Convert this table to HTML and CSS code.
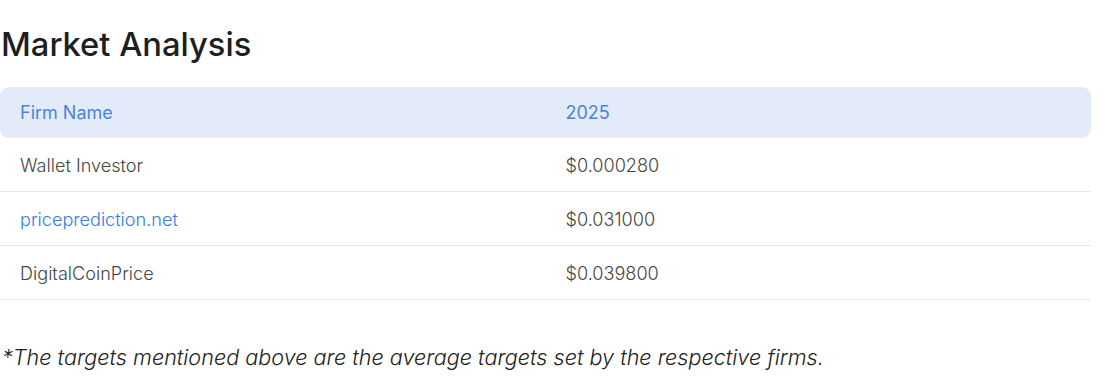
FILE: index.html
```html
<!DOCTYPE html>
<html lang="en">
<head>
<meta charset="utf-8">
<title>Market Analysis</title>
<link rel="stylesheet" href="styles.css">
</head>
<body>
<section class="analysis">
  <h2 class="title">Market Analysis</h2>
  <table class="market">
    <thead>
      <tr><th>Firm Name</th><th>2025</th></tr>
    </thead>
    <tbody>
      <tr><td>Wallet Investor</td><td>$0.000280</td></tr>
      <tr><td><a class="link" href="#">priceprediction.net</a></td><td>$0.031000</td></tr>
      <tr><td>DigitalCoinPrice</td><td>$0.039800</td></tr>
    </tbody>
  </table>
  <p class="note">*The targets mentioned above are the average targets set by the respective firms.</p>
</section>
</body>
</html>
```
FILE: styles.css
```css
html, body {
  margin: 0;
  padding: 0;
  background: #ffffff;
}
body {
  font-family: Inter, "Noto Sans", sans-serif;
  color: #3a3a3a;
}
.analysis {
  width: 1091px;
  padding-left: 2px;
}
.title {
  margin: 26px 0 25px -1px;
  font-size: 32.7px;
  font-weight: 500;
  line-height: 36px;
  color: #1e1e1e;
  letter-spacing: 0;
}
.market {
  width: 1091px;
  margin-left: -2px;
  border-collapse: separate;
  border-spacing: 0;
  table-layout: fixed;
  font-size: 18.1px;
}
.market th {
  text-align: left;
  font-weight: 400;
  font-size: 18px;
  color: #4a84e2;
  background: #e4ebf8;
  height: 51px;
  padding: 0 0 0 20px;
}
.market th:first-child { border-radius: 9px 0 0 9px; }
.market th:last-child { border-radius: 0 9px 9px 0; }
.market td {
  height: 53px;
  padding: 0 0 0 20px;
  border-bottom: 1px solid #e6e6e6;
  color: #464646;
  font-weight: 300;
}
.link {
  color: #2f7df0;
  text-decoration: none;
}
.note {
  margin: 44px 0 0 0;
  font-size: 21.6px;
  font-style: italic;
  font-weight: 300;
  color: #222222;
}
```
